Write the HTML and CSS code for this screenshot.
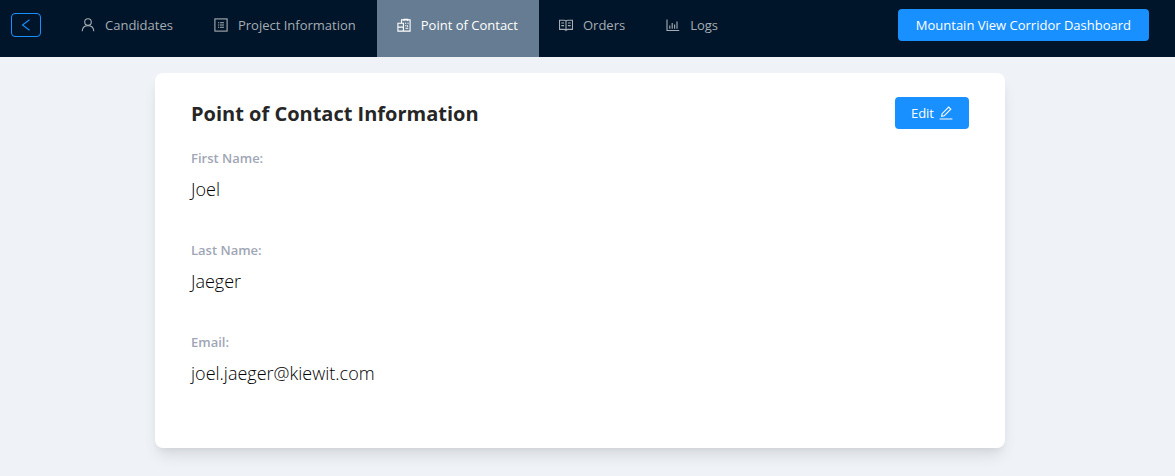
FILE: index.html
```html
<!DOCTYPE html>
<html lang="en">
<head>
<meta charset="utf-8">
<title>Point of Contact</title>
<link rel="stylesheet" href="styles.css">
</head>
<body>
<header class="topbar">
  <button class="back" type="button" aria-label="Back">
    <svg class="icon" viewBox="0 0 14 14"><path d="M10.5 1.8 3.5 7l7 5.2"/></svg>
  </button>
  <nav class="menu">
    <a class="menu-item" href="#candidates">
      <svg class="icon" viewBox="0 0 14 14"><circle cx="7" cy="4" r="3.3"/><path d="M1.2 13.2C1.4 9.8 3.8 7.6 7 7.6s5.600 2.200 5.800 5.600"/></svg>
      <span>Candidates</span>
    </a>
    <a class="menu-item" href="#project">
      <svg class="icon" viewBox="0 0 14 14"><rect x=".9" y=".9" width="12.200" height="12.200"/><path d="M4 4.800h1.200M6 4.800h4M4 7h1.200M6 7h4M4 9.200h1.200M6 9.200h4"/></svg>
      <span>Project Information</span>
    </a>
    <a class="menu-item active" href="#contact" aria-current="page">
      <svg class="icon" viewBox="0 0 14 14"><path d="M4.500 4.700V1.900h8.600v11.200H6.500M7 2.900V.7M10.700 2.900V.7M7 1.200h3.700M.9 5.300h5.500v7.800H.9zM.9 9.100h5.500M8 5.300h1.200M10.400 5.300h1.200M8.300 7.600h1M10.500 7.300v1.500M8.500 10.300h2.700"/></svg>
      <span>Point of Contact</span>
    </a>
    <a class="menu-item" href="#orders">
      <svg class="icon" viewBox="0 0 14 14"><path d="M.5 2.200h4.800Q7 2.200 7 3.600q0-1.400 1.700-1.400h4.800v9.200H9Q7.400 11.400 7 12.200q-.4-.8-2-.8H.5zM7 3.600v8.400M2.300 5h2.800M2.300 7.600h2.800M8.900 5h2.800M8.900 7.600h2.800"/></svg>
      <span>Orders</span>
    </a>
    <a class="menu-item" href="#logs">
      <svg class="icon" viewBox="0 0 14 14"><path d="M1 1.500v11h12.200M3.800 10.800V7.500M6.200 10.800V5M8.600 10.800V6.500M11 10.800V3.500"/></svg>
      <span>Logs</span>
    </a>
  </nav>
  <button class="primary" type="button">Mountain View Corridor Dashboard</button>
</header>
<main class="page">
  <section class="card">
    <div class="card-head">
      <h1>Point of Contact Information</h1>
      <button class="primary edit" type="button">Edit
        <svg class="icon" viewBox="0 0 14 14"><path d="M.6 13h12.800M2.600 10.300l.5-2.600L9.700 1.100l2.100 2.100-6.600 6.600z"/></svg>
      </button>
    </div>
    <dl class="fields">
      <div class="field"><dt>First Name:</dt><dd>Joel</dd></div>
      <div class="field"><dt>Last Name:</dt><dd>Jaeger</dd></div>
      <div class="field"><dt>Email:</dt><dd>joel.jaeger@kiewit.com</dd></div>
    </dl>
  </section>
</main>
</body>
</html>
```
FILE: styles.css
```css
* { box-sizing: border-box; }
body {
  margin: 0;
  min-height: 100vh;
  background: #eff2f7;
  font: 13px/22px "Segoe UI", "Open Sans", sans-serif;
}
.icon {
  width: 14px;
  height: 14px;
  flex: none;
  fill: none;
  stroke: currentColor;
  stroke-width: 1.100;
}
.topbar {
  display: flex;
  align-items: flex-start;
  padding: 0 26px 0 11px;
  background: #001529;
}
.back {
  display: flex;
  align-items: center;
  justify-content: center;
  width: 30px;
  height: 24px;
  margin: 13px 20px 0 0;
  padding: 0;
  border: 1px solid #1890ff;
  border-radius: 4px;
  background: transparent;
  color: #1890ff;
}
.menu { display: flex; flex: 1; }
.menu-item {
  display: flex;
  align-items: center;
  gap: 10px;
  padding: 14px 21px 21px 20px;
  color: #a6adb4;
  text-decoration: none;
  white-space: nowrap;
}
.menu-item.active { background: #667c92; color: #fff; }
.primary {
  height: 32px;
  padding: 0 18px;
  border: 0;
  border-radius: 4px;
  background: #1890ff;
  color: #fff;
  font: inherit;
  white-space: nowrap;
}
.topbar .primary { margin-top: 9px; }
.page { padding: 16px 15px 28px 0; }
.card {
  max-width: 850px;
  margin: 0 auto;
  padding: 24px 36px 27px;
  border-radius: 8px;
  background: #fff;
  box-shadow: 0 10px 15px -3px rgba(0, 0, 0, .1), 0 4px 6px -2px rgba(0, 0, 0, .05);
}
.card-head {
  display: flex;
  align-items: center;
  justify-content: space-between;
}
h1 {
  margin: 0;
  padding-top: 2px;
  color: #262626;
  font-size: 20px;
  font-weight: 700;
  line-height: 30px;
}
.primary.edit {
  display: flex;
  align-items: center;
  gap: 5px;
  padding: 0 16px;
}
.fields { margin: 0; padding-top: 16px; }
.field { height: 92px; }
dt {
  color: #a0a6b5;
  font-weight: 600;
  line-height: 26px;
}
dd {
  margin: 4px 0 0;
  color: #000;
  font-size: 18px;
  font-weight: 300;
  line-height: 28px;
}
```
